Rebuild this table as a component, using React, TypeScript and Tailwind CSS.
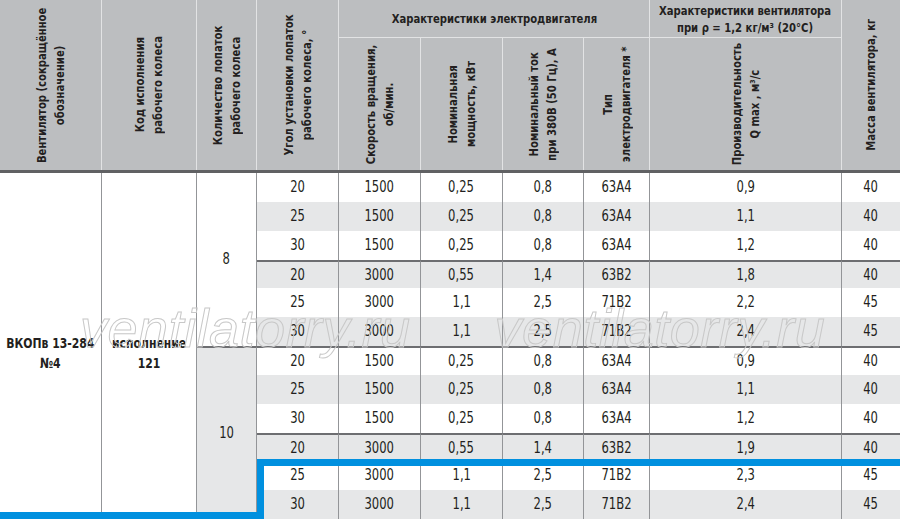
import React from 'react';

const font = { fontFamily: '"DejaVu Sans Condensed", "Liberation Sans", sans-serif' };

const rows = [
  ['20', '1500', '0,25', '0,8', '63A4', '0,9', '40'],
  ['25', '1500', '0,25', '0,8', '63A4', '1,1', '40'],
  ['30', '1500', '0,25', '0,8', '63A4', '1,2', '40'],
  ['20', '3000', '0,55', '1,4', '63B2', '1,8', '40'],
  ['25', '3000', '1,1', '2,5', '71B2', '2,2', '45'],
  ['30', '3000', '1,1', '2,5', '71B2', '2,4', '45'],
  ['20', '1500', '0,25', '0,8', '63A4', '0,9', '40'],
  ['25', '1500', '0,25', '0,8', '63A4', '1,1', '40'],
  ['30', '1500', '0,25', '0,8', '63A4', '1,2', '40'],
  ['20', '3000', '0,55', '1,4', '63B2', '1,9', '40'],
  ['25', '3000', '1,1', '2,5', '71B2', '2,3', '45'],
  ['30', '3000', '1,1', '2,5', '71B2', '2,4', '45'],
];

// rotated header label, squeezed along the text direction
function Vert({ children }: { children: React.ReactNode }) {
  return (
    <div className="flex h-full items-center justify-center">
      <div className="[writing-mode:vertical-rl] rotate-180 scale-y-[0.86] text-center whitespace-nowrap">{children}</div>
    </div>
  );
}

function Flat({ children, className = '' }: { children: React.ReactNode; className?: string }) {
  return <div className={`scale-x-[0.86] whitespace-nowrap text-center ${className}`}>{children}</div>;
}

function Header() {
  const cell = 'bg-[#bcbec0] border-[#e2e3e4]';
  return (
    <div className="grid grid-cols-[102px_95px_60px_82px_82px_82px_81px_66px_192px_58px] grid-rows-[37px_133px] border-b-[3px] border-[#606163] font-bold text-[13px] leading-[18px] text-[#231f20]">
      <div className={`${cell} col-start-1 row-start-1 row-span-2 border-r`}>
        <Vert>Вентилятор (сокращённое<br />обозначение)</Vert>
      </div>
      <div className={`${cell} col-start-2 row-start-1 row-span-2 border-r`}>
        <Vert>Код исполнения<br />рабочего колеса</Vert>
      </div>
      <div className={`${cell} col-start-3 row-start-1 row-span-2 border-r`}>
        <Vert>Количество лопаток<br />рабочего колеса</Vert>
      </div>
      <div className={`${cell} col-start-4 row-start-1 row-span-2 border-r`}>
        <Vert>Угол установки лопаток<br />рабочего колеса, °</Vert>
      </div>
      <div className={`${cell} col-start-5 col-span-4 row-start-1 border-r flex items-center justify-center`}>
        <Flat>Характеристики электродвигателя</Flat>
      </div>
      <div className={`${cell} col-start-9 row-start-1 border-r flex items-center justify-center`}>
        <Flat className="leading-[17px]">
          Характеристики вентилятора<br />при ρ = 1,2 кг/м³ (20°С)
        </Flat>
      </div>
      <div className={`${cell} col-start-10 row-start-1 row-span-2`}>
        <Vert>Масса вентилятора, кг</Vert>
      </div>
      <div className={`${cell} col-start-5 row-start-2 border-r border-t`}>
        <Vert>Скорость вращения,<br />об/мин.</Vert>
      </div>
      <div className={`${cell} col-start-6 row-start-2 border-r border-t`}>
        <Vert>Номинальная<br />мощность, кВт</Vert>
      </div>
      <div className={`${cell} col-start-7 row-start-2 border-r border-t`}>
        <Vert>Номинальный ток<br />при 380В (50 Гц), А</Vert>
      </div>
      <div className={`${cell} col-start-8 row-start-2 border-r border-t`}>
        <Vert>Тип<br />электродвигателя *</Vert>
      </div>
      <div className={`${cell} col-start-9 row-start-2 border-r border-t`}>
        <Vert>Производительность<br />Q max , м³/с</Vert>
      </div>
    </div>
  );
}

function Body() {
  return (
    <div className="grid h-[346px] grid-cols-[102px_95px_60px_82px_82px_82px_81px_66px_192px_58px] grid-rows-[repeat(12,minmax(0,1fr))] text-[15px] text-[#231f20]">
      <div className="col-start-1 row-start-1 row-span-12 flex items-center justify-center border-r border-[#939598] bg-white pt-[14px] text-[14px] font-bold leading-[20px]">
        <Flat>ВКОПв 13-284<br />№4</Flat>
      </div>
      <div className="col-start-2 row-start-1 row-span-12 flex items-center justify-center border-r border-[#939598] bg-white pt-[14px] text-[14px] font-bold leading-[20px]">
        <Flat>исполнение<br />121</Flat>
      </div>
      <div className="col-start-3 row-start-1 row-span-6 flex items-center justify-center border-r border-[#939598] bg-white">
        <span className="scale-x-[0.86]">8</span>
      </div>
      <div className="col-start-3 row-start-7 row-span-6 flex items-center justify-center border-r border-t-2 border-[#939598] border-t-[#6d6e71] bg-[#e6e7e8]">
        <span className="scale-x-[0.86]">10</span>
      </div>
      {rows.map((r, i) =>
        r.map((v, j) => {
          const bg = i % 2 === 1 ? 'bg-[#e6e7e8]' : 'bg-white';
          const sep = i === 3 || i === 6 || i === 9 ? 'border-t-2 border-t-[#6d6e71]' : '';
          const right = j < 6 ? 'border-r' : '';
          return (
            <div key={`${i}-${j}`} className={`flex items-center justify-center border-[#939598] ${bg} ${sep} ${right}`}>
              <span className="scale-x-[0.86]">{v}</span>
            </div>
          );
        })
      )}
    </div>
  );
}

export default function App() {
  return (
    <div className="relative h-[519px] w-[900px] overflow-hidden bg-white" style={font}>
      <Header />
      <Body />
      {/* watermark */}
      <div className="pointer-events-none absolute left-0 top-[301px] flex w-full text-[54px] italic leading-none tracking-[0.5px] text-transparent [-webkit-text-stroke:1px_#c8c8c8] [font-family:'Liberation_Sans',sans-serif]">
        <span className="ml-[80px]">ventilatorry.ru</span>
        <span className="ml-[84px]">ventilatorry.ru</span>
      </div>
      {/* blue highlight */}
      <div className="absolute left-[258px] top-[459px] h-[7px] w-[642px] bg-[#0090df]" />
      <div className="absolute left-[257px] top-[459px] h-[60px] w-[7px] bg-[#0090df]" />
      <div className="absolute left-0 top-[512px] h-[7px] w-[264px] bg-[#0090df]" />
    </div>
  );
}
